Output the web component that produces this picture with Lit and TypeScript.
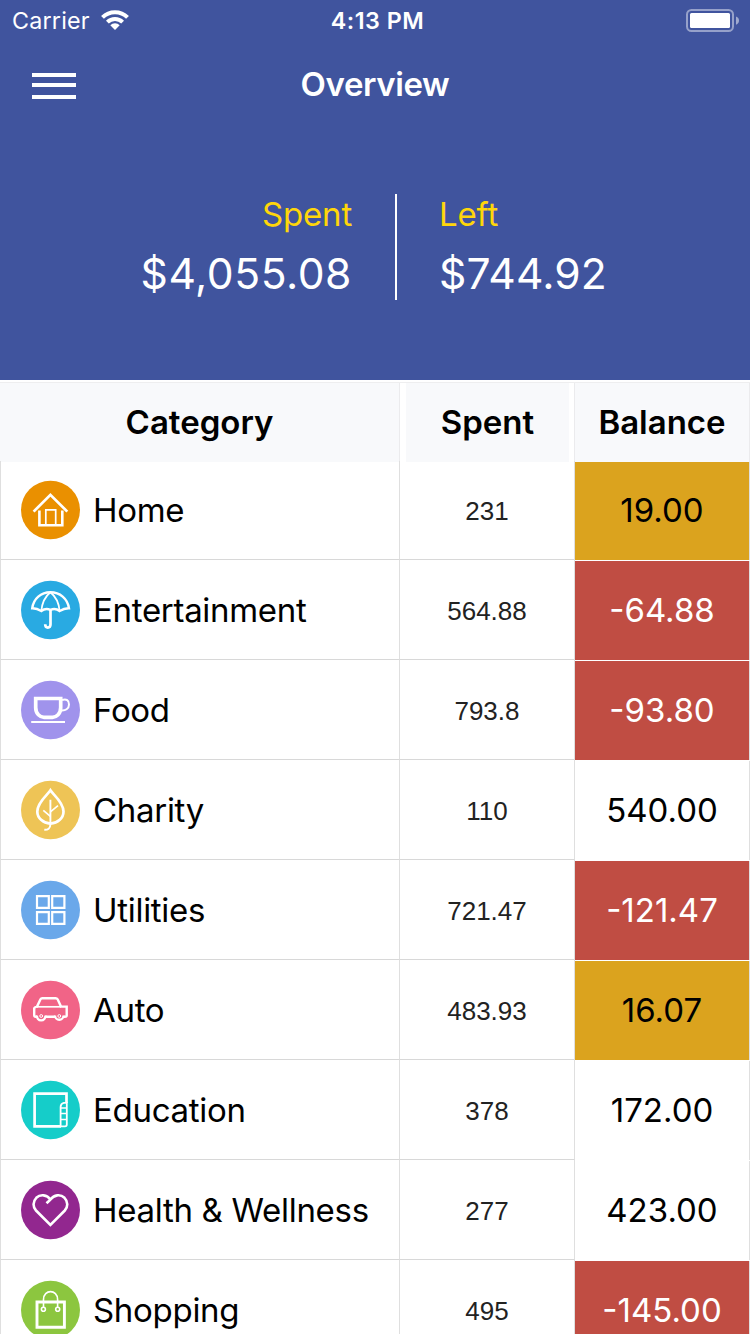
import { LitElement, html, css, svg, type SVGTemplateResult } from "lit";
import { customElement, property } from "lit/decorators.js";
import { classMap } from "lit/directives/class-map.js";

type Tone = "warn" | "over" | "ok";

interface Category {
  name: string;
  icon: string;
  spent: string;
  balance: string;
  tone: Tone;
}

const CATEGORIES: Category[] = [
  { name: "Home", icon: "home", spent: "231", balance: "19.00", tone: "warn" },
  { name: "Entertainment", icon: "umbrella", spent: "564.88", balance: "-64.88", tone: "over" },
  { name: "Food", icon: "cup", spent: "793.8", balance: "-93.80", tone: "over" },
  { name: "Charity", icon: "leaf", spent: "110", balance: "540.00", tone: "ok" },
  { name: "Utilities", icon: "grid", spent: "721.47", balance: "-121.47", tone: "over" },
  { name: "Auto", icon: "car", spent: "483.93", balance: "16.07", tone: "warn" },
  { name: "Education", icon: "book", spent: "378", balance: "172.00", tone: "ok" },
  { name: "Health & Wellness", icon: "heart", spent: "277", balance: "423.00", tone: "ok" },
  { name: "Shopping", icon: "bag", spent: "495", balance: "-145.00", tone: "over" },
];

const ICONS: Record<string, { color: string; art: SVGTemplateResult }> = {
  home: {
    color: "#ea9000",
    art: svg`
      <path d="M13.6 31.6 30.4 14.8 47.3 31.6" stroke-width="2.7"/>
      <path d="M19.4 30.5V45.2H42.3V30.5" stroke-width="2.6"/>
      <path d="M25.8 45V29.9H35.7V45" stroke-width="1.7"/>`,
  },
  umbrella: {
    color: "#29aae2",
    art: svg`
      <path d="M12.2 28.3C13.5 18.5 21 12.2 30.4 12.2S47.6 18.5 49 28.3C46 28.2 42.500 29.200 39.600 31C37 28.900 33.500 28.600 30.400 29.800C27.500 28.600 24 28.900 21.300 31C18.500 29.200 15.500 28.200 12.200 28.300Z" stroke-width="2.4"/>
      <path d="M21.300 31C22 23.500 25 16.500 30.400 12.200C35.800 16.500 39 23.500 39.600 31" stroke-width="1.8"/>
      <path d="M30.500 29.800V44.300C30.500 48.700 25.200 48.700 25.200 44.300" stroke-width="2.700"/>`,
  },
  cup: {
    color: "#a093ec",
    art: svg`
      <path d="M15.700 18.500H40.700V27.500C40.700 34 36.500 37.300 32.500 37.300H24C20 37.300 15.700 34 15.700 27.500Z" stroke-width="3.700"/>
      <path d="M42 20C46.500 18.400 49 20.600 49 24.500C49 28.800 45.500 31 40.500 30.300" stroke-width="2"/>
      <path d="M11.200 42H45" stroke-width="2"/>`,
  },
  leaf: {
    color: "#eec456",
    art: svg`
      <path d="M30.400 10.300C28 14.500 17.300 22 17.300 31.500C17.300 38 23 43 30.400 43.600C38 43 43.500 38 43.500 31.500C43.500 22 33 14.500 30.400 10.300Z" stroke-width="2.700"/>
      <path d="M30.400 19.800V44.500C30.200 48.500 28 50 24.300 49.800" stroke-width="1.900"/>
      <path d="M30.400 36.300 23.300 30.300M30.400 31.800 38 25.700" stroke-width="1.700"/>`,
  },
  grid: {
    color: "#6aa8ea",
    art: svg`
      <path d="M17 16.200H28.800V27.800H17ZM32.200 16.200H44.400V27.800H32.200ZM17 32.200H28.800V43.800H17ZM32.200 32.200H44.400V43.800H32.200Z" stroke-width="2.2"/>`,
  },
  car: {
    color: "#f16487",
    art: svg`
      <path d="M17 36.700H15.500Q14.200 36.700 14.200 35V28.500Q14.500 27 17 26.600L20.500 19.300Q21 18.200 22.300 18.200H35.500Q37 18.200 37.600 19.300L41 26.600H46.700V35.500Q46.700 36.700 45 36.700H43.600M25.300 36.700H35" stroke-width="2.400"/>
      <path d="M16.500 26.800H41" stroke-width="1.700"/>
      <path d="M17 35.500A4.200 4.200 0 1 0 25.300 35.500M35 35.500A4.200 4.200 0 1 0 43.500 35.500" stroke-width="2.300"/>
      <circle cx="21.200" cy="36" r="1.400" stroke-width="1"/>
      <circle cx="39.300" cy="36" r="1.400" stroke-width="1"/>`,
  },
  book: {
    color: "#15cdc9",
    art: svg`
      <path d="M41 46.400H14.600V13.600H46.500V23" stroke-width="2.700"/>
      <path d="M46.800 22.800H43.800Q40.600 23.500 40.600 27V46.400H45Q46.800 46.400 46.800 44.500Z" stroke-width="1.800"/>
      <path d="M41 28H46.500M41 33.600H46.500M41 39.600H46.500" stroke-width="1.500"/>`,
  },
  heart: {
    color: "#92278f",
    art: svg`
      <path d="M26.500 23.300 30.400 19.600C34 14.500 40.500 14 44.500 17.800C48.300 21.600 48 27 44.800 30.500L30.400 44.900 16 30.500C12.800 27 12.600 21.600 16.300 17.800C20.300 14 27 14.500 30.400 19.600" stroke-width="2.600"/>`,
  },
  bag: {
    color: "#8cc63f",
    art: svg`
      <path d="M17 22H44.400V47.300H17Z" stroke-width="2.900"/>
      <path d="M23.500 27V19.500C23.500 9 37.600 9 37.600 19.500V27" stroke-width="1.600"/>
      <circle cx="23.400" cy="29.200" r="2" stroke-width="1.600"/>
      <circle cx="37.700" cy="29.200" r="2" stroke-width="1.600"/>`,
  },
};

@customElement("category-icon")
class CategoryIcon extends LitElement {
  @property() name = "home";

  static styles = css`
    :host { display: block; width: 60px; height: 60px; }
    .icon { display: block; }
  `;

  render() {
    const icon = ICONS[this.name];
    return html`<svg class="icon" width="60" height="60" viewBox="0 0 60 60">
      <ellipse cx="30.500" cy="30" rx="29.500" ry="29.200" fill=${icon.color}></ellipse>
      <g fill="none" stroke="#fff">${icon.art}</g>
    </svg>`;
  }
}

@customElement("status-bar")
class StatusBar extends LitElement {
  static styles = css`
    :host {
      display: grid;
      grid-template-columns: 1fr auto 1fr;
      align-items: center;
      height: 40px;
      padding: 0 10px 0 12px;
      font-size: 23.3px;
      line-height: 38px;
    }
    .left { display: flex; align-items: center; gap: 10px; }
    .carrier { letter-spacing: 0.2px; padding-top: 2px; }
    .time { font-weight: 600; letter-spacing: 0.5px; padding: 2px 0 0 3px; }
    .battery { justify-self: end; display: block; }
    .wifi { display: block; }
  `;

  render() {
    return html`
      <div class="left">
        <span class="carrier">Carrier</span>
        <svg class="wifi" width="30" height="22" viewBox="0 0 30 22">
          <g fill="none" stroke="#fff" stroke-width="4">
            <path d="M2.500 8.300A17.700 17.700 0 0 1 27.500 8.300"/>
            <path d="M7.400 13.200A10.800 10.800 0 0 1 22.600 13.200"/>
          </g>
          <path d="M10.300 16.200A6.600 6.600 0 0 1 19.700 16.200L15 20.900Z" fill="#fff"/>
        </svg>
      </div>
      <span class="time">4:13 PM</span>
      <svg class="battery" width="54" height="24" viewBox="0 0 54 24">
        <rect x="1" y="2" width="46" height="21" rx="4.500" fill="none" stroke="#fff" stroke-opacity="0.45" stroke-width="2"/>
        <rect x="4" y="5" width="40" height="15" rx="1.500" fill="#fff"/>
        <path d="M50 8.500Q53 9.500 53 12.500T50 16.700Z" fill="#fff" fill-opacity="0.5"/>
      </svg>
    `;
  }
}

@customElement("app-root")
class AppRoot extends LitElement {
  static styles = css`
    :host {
      display: block;
      width: 750px;
      height: 1334px;
      overflow: hidden;
      background: #fff;
      color: #000;
      font-family: Inter, "Liberation Sans", sans-serif;
      font-size: 33px;
    }
    .top { height: 380px; background: #40549e; color: #fff; }
    .nav {
      display: grid;
      grid-template-columns: 1fr auto 1fr;
      align-items: center;
      height: 88px;
      padding: 0 32px;
    }
    .menu { display: block; }
    .title { margin: 0; font-size: 33px; font-weight: 600; line-height: 88px; letter-spacing: -0.4px; }
    .summary {
      display: grid;
      grid-template-columns: 395px 2px 1fr;
      height: 106px;
      margin-top: 66px;
    }
    .divider { background: #fff; }
    .total { display: flex; flex-direction: column; padding: 0 42px; }
    .total.spent { align-items: flex-end; padding-right: 43px; }
    .label { color: #ffd60a; line-height: 40px; letter-spacing: -0.2px; }
    .amount { font-size: 42.6px; line-height: 52px; margin-top: 14px; letter-spacing: 0.15px; }
    .spent .amount { letter-spacing: 0.55px; }
    .head, .row { display: grid; grid-template-columns: 400px 175px 175px; }
    .head {
      height: 78px;
      margin-top: 2px;
      border-top: 1px solid #eeeeef;
      font-weight: 600;
      line-height: 78px;
      text-align: center;
    }
    .th { box-sizing: border-box; height: 79px; background: #f8f9fb; border-right: 1px solid #ebebed; }
    .th.mid {
      padding: 0 5px 0 6px;
      background: linear-gradient(#f8f9fb, #f8f9fb) 6px 0 / 163px 79px no-repeat #fff;
    }
    .row { height: 100px; }
    .row.first { height: 99px; }
    .cell {
      box-sizing: border-box;
      display: flex;
      align-items: center;
      border-right: 1px solid #dfdfdf;
      border-bottom: 1px solid #d8d8d8;
    }
    .name { border-left: 1px solid #dfdfdf; padding-left: 19px; gap: 13px; }
    .name-text { padding-top: 1px; letter-spacing: -0.3px; }
    .first .name-text { padding-top: 0; }
    .spent-cell {
      justify-content: center;
      padding-top: 3px;
      color: #222;
      font-family: "Liberation Sans", Arial, sans-serif;
      font-size: 26px;
    }
    .first .spent-cell { padding-top: 2px; }
    .balance {
      margin-top: 1px;
      padding-bottom: 2px;
      justify-content: center;
      border-bottom: 0;
      background: #fff;
    }
    .balance.warn { background: #dba31e; }
    .balance.over { background: #c04d43; color: #fff; }
  `;

  render() {
    return html`
      <header class="top">
        <status-bar></status-bar>
        <nav class="nav">
          <svg class="menu" width="44" height="30" viewBox="0 0 44 30" fill="#fff">
            <rect y="4" width="44" height="4"/>
            <rect y="14" width="44" height="4"/>
            <rect y="26" width="44" height="4"/>
          </svg>
          <h1 class="title">Overview</h1>
        </nav>
        <section class="summary">
          <div class="total spent">
            <span class="label">Spent</span>
            <span class="amount">$4,055.08</span>
          </div>
          <div class="divider"></div>
          <div class="total">
            <span class="label">Left</span>
            <span class="amount">$744.92</span>
          </div>
        </section>
      </header>
      <div class="head">
        <div class="th">Category</div>
        <div class="th mid">Spent</div>
        <div class="th">Balance</div>
      </div>
      ${CATEGORIES.map(
        (c, i) => html`
          <div class=${classMap({ row: true, first: i === 0 })}>
            <div class="cell name">
              <category-icon name=${c.icon}></category-icon>
              <span class="name-text">${c.name}</span>
            </div>
            <div class="cell spent-cell">${c.spent}</div>
            <div class=${classMap({ cell: true, balance: true, [c.tone]: true })}>${c.balance}</div>
          </div>
        `
      )}
    `;
  }
}
